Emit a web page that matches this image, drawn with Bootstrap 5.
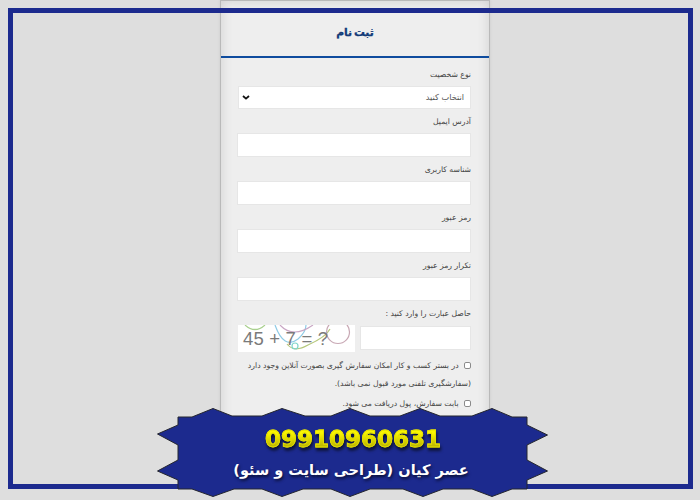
<!DOCTYPE html>
<html lang="fa">
<head>
<meta charset="utf-8">
<title>ثبت نام</title>
<link href="https://cdn.jsdelivr.net/npm/bootstrap@5.3.0/dist/css/bootstrap.min.css" rel="stylesheet">
<style>
html,body{height:500px;overflow:hidden}
body{background:#dedede;font-family:"DejaVu Sans",sans-serif;position:relative}
.reg-card{width:270px;height:480px;margin-left:220px;border:1px solid #b9b9b9;border-radius:0;background:#eee;box-shadow:inset 0 0 12px #cfcfcf,0 0 3px #ccc}
.reg-head{height:57px;background:transparent;border:0;border-bottom:2px solid #0f4c9e;border-radius:0;padding:13px 0 0;text-align:center}
.reg-title{font-size:10.8px;font-weight:700;color:#123a78;line-height:38px;margin:0;word-spacing:-2px;-webkit-text-stroke:.3px #123a78}
.reg-body{padding:4px 18px 0 16px}
.reg-label{display:block;height:24px;line-height:26px;margin:0;font-size:7.7px;color:#444;text-align:right}
.reg-input{height:24px;border:1px solid #e6e6e6;border-radius:0;padding:0 6px;background:#fff}
.reg-select{height:23px;width:233px;margin-left:1px;padding:0 6px;font-size:8.2px;color:#555;border:1px solid #e6e6e6;border-radius:0;background-color:#fff;background-image:url("data:image/svg+xml,%3Csvg xmlns='http://www.w3.org/2000/svg' viewBox='0 0 8 5'%3E%3Cpath d='M1 1l3 2.6L7 1' fill='none' stroke='%23111' stroke-width='1.8'/%3E%3C/svg%3E");background-repeat:no-repeat;background-size:8px 5px;background-position:left 3px center;display:block}
.cap-box{width:117px;height:27px;background:#fff}
.cap-field{width:111px;margin-top:1px}
.reg-cap{gap:5px}
.reg-check{font-size:7.7px;color:#444;line-height:18px;white-space:nowrap;text-align:right;margin-top:5px}
.reg-check+.reg-check{margin-top:2px}
.reg-check input{width:7px;height:7px;margin:0 0 0 3px;border:1px solid #8a8a8a;border-radius:1px;vertical-align:middle;float:none;background:#fff}
.site-frame{position:absolute;left:8px;top:8px;width:685px;height:481px;border:5px solid #1c2a8e;pointer-events:none}
.promo{position:absolute;left:157px;top:408px;width:391px;height:89px}
.promo svg{position:absolute;left:0;top:0}
.promo-phone{position:absolute;left:196px;transform:translateX(-50%);top:16px;white-space:nowrap;text-align:center;font-family:"DejaVu Sans",sans-serif;font-weight:700;font-size:23px;line-height:30px;-webkit-text-stroke:.8px #e6e200;background:linear-gradient(#fbf600 30%,#b5ae00 80%);-webkit-background-clip:text;background-clip:text;color:transparent;filter:drop-shadow(1px 3px 1.5px #0c1233)}
.promo-name{position:absolute;left:0;right:0;top:49px;padding-right:3px;text-align:center;font-family:"DejaVu Sans",sans-serif;font-weight:700;font-size:14.5px;line-height:26px;color:#fff;text-shadow:1px 2px 3px #0a0f33;white-space:nowrap}
</style>
</head>
<body>
<div class="card reg-card" dir="rtl">
  <div class="card-header reg-head"><h1 class="reg-title">ثبت نام</h1></div>
  <div class="card-body reg-body">
    <form>
      <label class="reg-label">نوع شخصیت</label>
      <select class="form-select reg-select"><option>انتخاب کنید</option></select>
      <label class="reg-label">آدرس ایمیل</label>
      <input type="text" class="form-control reg-input">
      <label class="reg-label">شناسه کاربری</label>
      <input type="text" class="form-control reg-input">
      <label class="reg-label">رمز عبور</label>
      <input type="password" class="form-control reg-input">
      <label class="reg-label">تکرار رمز عبور</label>
      <input type="password" class="form-control reg-input">
      <label class="reg-label">حاصل عبارت را وارد کنید :</label>
      <div class="d-flex reg-cap align-items-start">
        <input type="text" class="form-control reg-input cap-field">
        <div class="cap-box" dir="ltr">
          <svg width="117" height="27" viewBox="0 0 117 27" xmlns="http://www.w3.org/2000/svg" fill="none">
            <path d="M7 0Q17 9 27 0" stroke="#a9d08e" stroke-width="1.2"/>
            <path d="M37 0Q46 25 60 14Q68 7 68 0" stroke="#8fcbe6" stroke-width="1.2"/>
            <path d="M42 0Q55 14 75 0" stroke="#c9a6c4" stroke-width="1.2"/>
            <path d="M49 19Q56 28 70 20Q88 12 92 4" stroke="#b5c77a" stroke-width="1.2"/>
            <circle cx="100" cy="7" r="11.5" stroke="#c8a8b4" stroke-width="1.2"/>
            <circle cx="57" cy="21" r="3" stroke="#7fd6cc" stroke-width="1.2"/>
            <text x="5" y="20" font-family="Liberation Sans, sans-serif" font-size="18.5" fill="#7a7a7a" textLength="85">45 + 7 = ?</text>
          </svg>
        </div>
      </div>
      <div class="reg-check"><input type="checkbox" class="form-check-input"> در بستر کسب و کار امکان سفارش گیری بصورت آنلاین وجود دارد<br>(سفارشگیری تلفنی مورد قبول نمی باشد).</div>
      <div class="reg-check"><input type="checkbox" class="form-check-input"> بابت سفارش، پول دریافت می شود.</div>
    </form>
  </div>
</div>
<div class="site-frame"></div>
<div class="promo">
  <svg width="391" height="89" viewBox="157 408 391 89" xmlns="http://www.w3.org/2000/svg">
    <polygon fill="#1c2a8e" stroke="#24262e" stroke-width="1" points="178,417 192,417 213,408.5 232,416 262,416 282,408.5 305,416 331,416 350,408.5 370,416 400,416 420,408.5 440,416 472,416 492,408.5 512,417 527,417 527,425 547.5,435 527,445 527,460 547.5,471 527,480 527,489 512,489 492,496.5 472,489 443,489 423,496.5 403,489 370,489 350,496.5 331,489 303,489 282,496.5 262,489 234,489 213,496.5 192,489 178,489 178,480 157.5,471 178,460 178,445 157.5,434 178,425"/>
  </svg>
  <div class="promo-phone">09910960631</div>
  <div class="promo-name" dir="rtl">عصر کیان (طراحی سایت و سئو)</div>
</div>
<script src="https://cdn.jsdelivr.net/npm/bootstrap@5.3.0/dist/js/bootstrap.bundle.min.js"></script>
</body>
</html>
